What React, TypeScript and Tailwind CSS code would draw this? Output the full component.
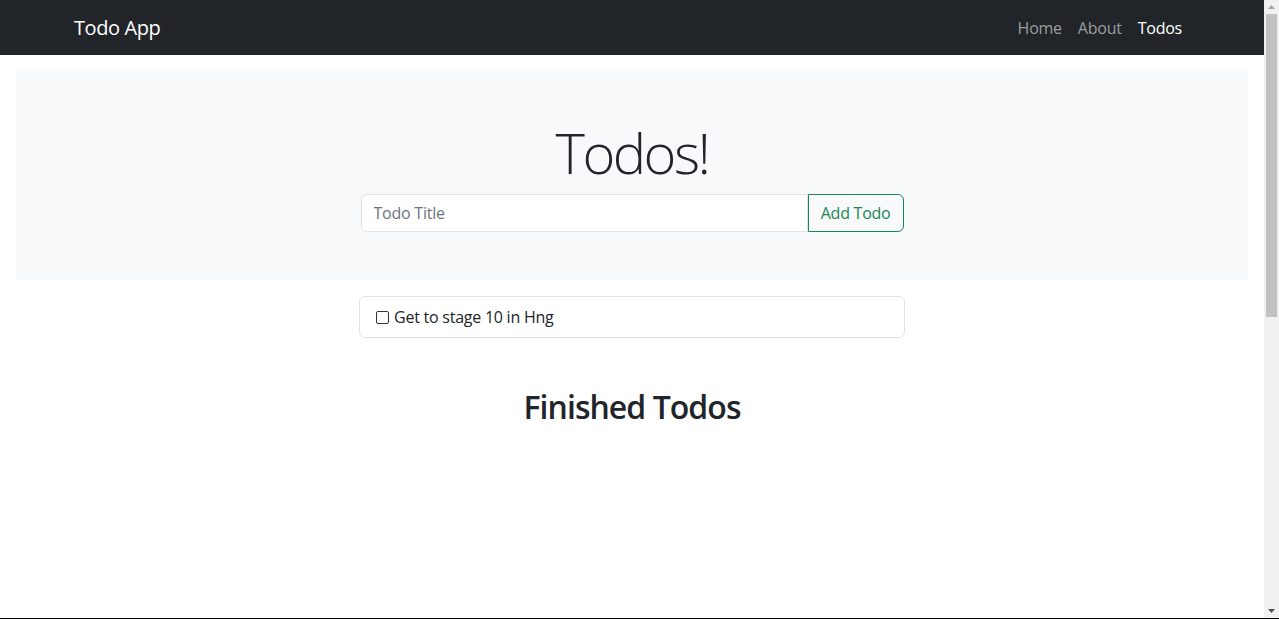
import { useState } from 'react'

// Todo page: dark navbar, light jumbotron with the add form, todo list and finished section
function Scrollbar() {
  return (
    <aside className="flex w-[15px] shrink-0 flex-col bg-[#f1f1f1]">
      <div className="flex h-[14px] items-center justify-center">
        <svg width="7" height="4" viewBox="0 0 7 4"><path d="M3.5 0L7 4H0z" fill="#a3a3a3" /></svg>
      </div>
      <div className="flex-1 px-[2px]">
        <div className="h-[303px] bg-[#c1c1c1]" />
      </div>
      <div className="flex h-[15px] items-center justify-center">
        <svg width="7" height="4" viewBox="0 0 7 4"><path d="M0 0H7L3.5 4z" fill="#505050" /></svg>
      </div>
    </aside>
  )
}

export default function App() {
  const [title, setTitle] = useState('')

  return (
    <div className="flex h-[619px] overflow-hidden border-b border-black bg-white text-[#212529] font-['Open_Sans','Noto_Sans',sans-serif]">
      <main className="min-w-0 flex-1">
        <nav className="h-[55px] bg-[#212529]">
          <div className="mx-auto flex h-full max-w-[1140px] items-center justify-between px-3">
            <a href="#" className="text-[20px] tracking-[-0.02em] text-white">Todo App</a>
            <ul className="flex text-[16px] tracking-[-0.015em]">
              <li><a href="#" className="px-2 text-[#9a9da0]">Home</a></li>
              <li><a href="#" className="px-2 text-[#9a9da0]">About</a></li>
              <li><a href="#" className="px-2 text-white">Todos</a></li>
            </ul>
          </div>
        </nav>

        <div className="m-4 bg-[#f8f9fa] px-5 py-12 text-center">
          <h1 className="mb-2 text-[56px] font-light leading-[1.2] tracking-[-0.045em]">Todos!</h1>
          <form className="mx-auto flex w-[543px]" onSubmit={e => e.preventDefault()}>
            <input
              value={title}
              onChange={e => setTitle(e.target.value)}
              placeholder="Todo Title"
              className="h-[38px] min-w-0 flex-1 rounded-l-md border border-[#dee2e6] bg-white px-3 text-[16px] tracking-[-0.015em] outline-none placeholder:text-[#6c757d]"
            />
            <button className="h-[38px] rounded-r-md border border-[#198754] px-3 text-[16px] tracking-[-0.015em] text-[#198754]">
              Add Todo
            </button>
          </form>
        </div>

        <div className="mx-auto w-[546px]">
          <div className="flex items-center gap-[5px] rounded-md border border-[#dee2e6] px-4 py-2 text-[16px] leading-6 tracking-[-0.015em]">
            <span className="inline-block h-[13px] w-[13px] rounded-[2px] border-[1.5px] border-[#333]" />
            <span>Get to stage 10 in Hng</span>
          </div>
        </div>

        <h2 className="mt-[50px] text-center text-[32px] font-semibold leading-[1.2] tracking-[-0.03em]">Finished Todos</h2>
      </main>
      <Scrollbar />
    </div>
  )
}
